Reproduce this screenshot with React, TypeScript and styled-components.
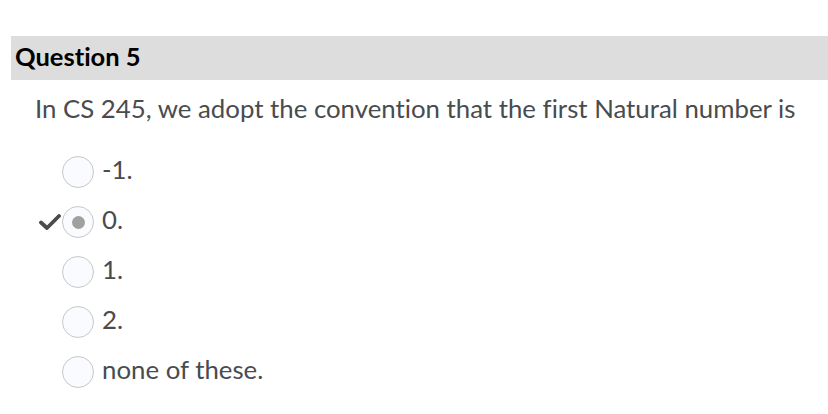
import React from "react";
import styled, { createGlobalStyle } from "styled-components";

const Global = createGlobalStyle`
  html, body { margin: 0; padding: 0; background: #ffffff; }
  body { font-family: Lato, "Noto Sans", sans-serif; font-variant-ligatures: none; }
`;

const Page = styled.div`
  padding-top: 36px;
  width: 828px;
`;

const Header = styled.div`
  margin-left: 11px;
  height: 44px;
  background: #dddddd;
  display: flex;
  align-items: center;
  padding-left: 4px;
`;

const Title = styled.h2`
  margin: 0;
  font-family: Lato, sans-serif;
  font-weight: 700;
  font-size: 25.5px;
  color: #000000;
  transform: translateY(-2px);
`;

const Prompt = styled.p`
  margin: 0;
  padding: 10px 0 0 35px;
  font-size: 25.8px;
  line-height: 36px;
  color: #494c4e;
`;

const Options = styled.div`
  display: flex;
  flex-direction: column;
  padding: 21px 0 0 37px;
`;

const Row = styled.label`
  display: flex;
  align-items: center;
  height: 50px;
`;

const CheckSlot = styled.span`
  width: 25px;
  display: flex;
  align-items: center;
  justify-content: flex-start;
  padding-left: 2px;
  box-sizing: border-box;
`;

const Radio = styled.span<{ $checked?: boolean }>`
  width: 32px;
  height: 32px;
  box-sizing: border-box;
  border-radius: 50%;
  border: 1px solid #c8c8c8;
  background: #f9fbff;
  display: flex;
  align-items: center;
  justify-content: center;
  flex: none;
  &::after {
    content: "";
    display: ${(p) => (p.$checked ? "block" : "none")};
    width: 13px;
    height: 13px;
    border-radius: 50%;
    background: #a0a0a0;
  }
`;

const OptionText = styled.span`
  margin-left: 8px;
  font-size: 25.8px;
  line-height: 30px;
  color: #494c4e;
  transform: translateY(-3px);
`;

const Check = () => (
  <svg width="22" height="16" viewBox="0 0 22 16">
    <path d="M2 8.5 L8 14 L20 2" fill="none" stroke="#494c4e" strokeWidth="3.8" strokeLinecap="round" strokeLinejoin="round" />
  </svg>
);

const options = [
  { text: "-1.", checked: false, correct: false },
  { text: "0.", checked: true, correct: true },
  { text: "1.", checked: false, correct: false },
  { text: "2.", checked: false, correct: false },
  { text: "none of these.", checked: false, correct: false },
];

export default function App() {
  return (
    <Page>
      <Global />
      <Header>
        <Title>Question 5</Title>
      </Header>
      <Prompt>In CS 245, we adopt the convention that the first Natural number is</Prompt>
      <Options>
        {options.map((o) => (
          <Row key={o.text}>
            <CheckSlot>{o.correct && <Check />}</CheckSlot>
            <Radio $checked={o.checked} />
            <OptionText>{o.text}</OptionText>
          </Row>
        ))}
      </Options>
    </Page>
  );
}
